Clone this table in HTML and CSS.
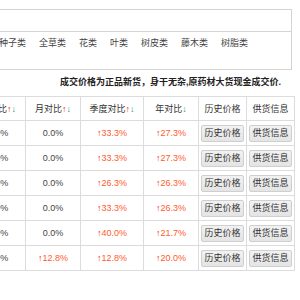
FILE: index.html
```html
<!DOCTYPE html>
<html lang="zh">
<head>
<meta charset="utf-8">
<link rel="stylesheet" href="styles.css">
</head>
<body>
<div class="page">
  <section class="catbox">
    <div class="catbox-head"></div>
    <div class="catbox-list">
      <span>果实种子类</span><span>全草类</span><span>花类</span><span>叶类</span><span>树皮类</span><span>藤木类</span><span>树脂类</span>
    </div>
  </section>
  <p class="notice">成交价格为正品新货，身干无杂,原药材大货现金成交价.</p>
  <table class="prices">
    <colgroup>
      <col class="c55"><col class="c55"><col class="c63"><col class="c55"><col class="c48"><col class="c48">
    </colgroup>
    <tr>
      <th>周对比<span class="up">↑</span><span class="down">↓</span></th>
      <th>月对比<span class="up">↑</span><span class="down">↓</span></th>
      <th>季度对比<span class="up">↑</span><span class="down">↓</span></th>
      <th>年对比<span class="down">↓</span></th>
      <th>历史价格</th>
      <th>供货信息</th>
    </tr>
    <tr>
      <td>0.0%</td><td>0.0%</td><td class="rise"><span class="up">↑</span>33.3%</td><td class="rise"><span class="up">↑</span>27.3%</td>
      <td><button class="btn">历史价格</button></td><td><button class="btn">供货信息</button></td>
    </tr>
    <tr>
      <td>0.0%</td><td>0.0%</td><td class="rise"><span class="up">↑</span>33.3%</td><td class="rise"><span class="up">↑</span>27.3%</td>
      <td><button class="btn">历史价格</button></td><td><button class="btn">供货信息</button></td>
    </tr>
    <tr>
      <td>0.0%</td><td>0.0%</td><td class="rise"><span class="up">↑</span>26.3%</td><td class="rise"><span class="up">↑</span>26.3%</td>
      <td><button class="btn">历史价格</button></td><td><button class="btn">供货信息</button></td>
    </tr>
    <tr>
      <td>0.0%</td><td>0.0%</td><td class="rise"><span class="up">↑</span>33.3%</td><td class="rise"><span class="up">↑</span>26.3%</td>
      <td><button class="btn">历史价格</button></td><td><button class="btn">供货信息</button></td>
    </tr>
    <tr>
      <td>0.0%</td><td>0.0%</td><td class="rise"><span class="up">↑</span>40.0%</td><td class="rise"><span class="up">↑</span>21.7%</td>
      <td><button class="btn">历史价格</button></td><td><button class="btn">供货信息</button></td>
    </tr>
    <tr>
      <td>0.0%</td><td class="rise"><span class="up">↑</span>12.8%</td><td class="rise"><span class="up">↑</span>12.8%</td><td class="rise"><span class="up">↑</span>20.0%</td>
      <td><button class="btn">历史价格</button></td><td><button class="btn">供货信息</button></td>
    </tr>
  </table>
</div>
</body>
</html>
```
FILE: styles.css
```css
html, body {
  margin: 0;
  padding: 0;
  background: #fff;
}
body {
  font-family: "Liberation Sans", "Noto Sans CJK SC", sans-serif;
  font-size: 9px;
  color: #333;
}
.page {
  margin-left: -30px;
  width: 324px;
  padding-top: 9px;
}
.catbox {
  display: block;
  border-top: 1px solid #d4d4d4;
  border-right: 1px solid #d4d4d4;
  border-bottom: 1px solid #d4d4d4;
  border-left: 1px solid #d4d4d4;
  margin: 0 2px 0 0;
  background: #fff;
}
.catbox-head {
  height: 21px;
  border-bottom: 1px solid #d4d4d4;
}
.catbox-list {
  display: flex;
  gap: 13px;
  padding: 5px 0 20px 10px;
  line-height: 12px;
  color: #444;
}
.notice {
  margin: 6px 0 8px;
  line-height: 12px;
  text-align: right;
  padding-right: 13px;
  font-weight: bold;
  color: #222;
}
.prices {
  border-collapse: collapse;
  table-layout: fixed;
  width: 325px;
}
.c55 { width: 55px; }
.c63 { width: 63px; }
.c48 { width: 48px; }
.prices th, .prices td {
  border: 1px solid #dcdcdc;
  text-align: center;
  padding: 0;
  white-space: nowrap;
  overflow: hidden;
}
.prices th {
  height: 23px;
  font-weight: normal;
  color: #333;
}
.prices td {
  height: 24px;
  color: #444;
}
.up { color: #ee2222; }
.down { color: #1a9a55; }
.prices td.rise { color: #ff5a2c; }
.prices td.rise .up { color: #ee2a20; }
.btn {
  font: inherit;
  font-size: 9px;
  color: #333;
  width: 43px;
  height: 17px;
  padding: 0;
  border: 1px solid #cfcfcf;
  border-radius: 2px;
  background: linear-gradient(#f2f2f2, #e4e4e4);
  line-height: 15px;
  display: block;
  margin: 0 auto;
}
```
